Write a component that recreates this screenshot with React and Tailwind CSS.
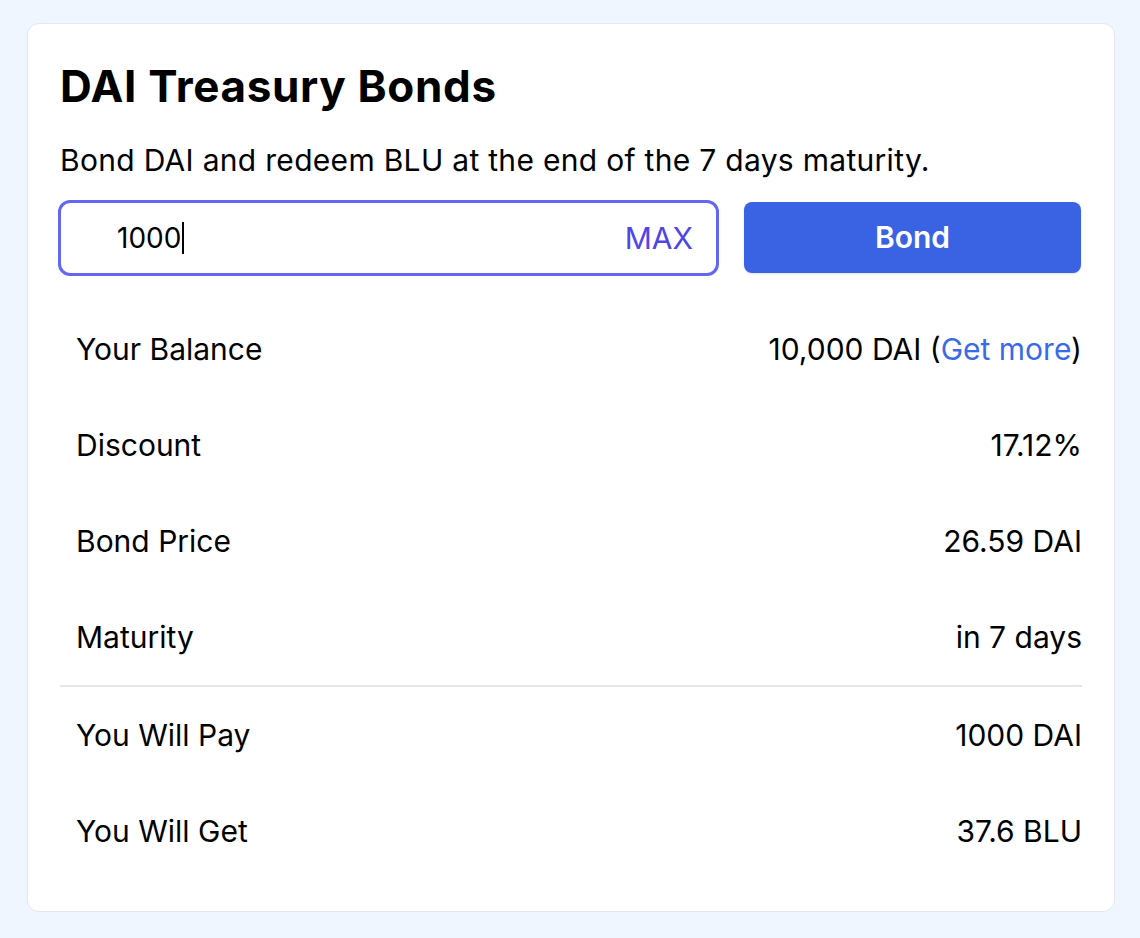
const rows = [
  { label: 'Your Balance', value: 'balance' },
  { label: 'Discount', value: '17.12%' },
  { label: 'Bond Price', value: '26.59 DAI' },
  { label: 'Maturity', value: 'in 7 days' },
];

const totals = [
  { label: 'You Will Pay', value: '1000 DAI' },
  { label: 'You Will Get', value: '37.6 BLU' },
];

const Row = ({ label, children }) => (
  <div className="flex justify-between items-center pl-4 py-8 text-[30px] leading-8 text-black">
    <span>{label}</span>
    <span>{children}</span>
  </div>
);

const App = () => {
  return (
    <div className="min-h-screen bg-[#eff6ff] pt-[23px] pl-[27px] font-['Inter',sans-serif]">
      <div className="w-[1088px] bg-white border border-[#e5e7eb] rounded-xl px-8 pt-[38px] pb-8">
        <h1 className="text-[44px] leading-[48px] font-bold text-black tracking-[0.015em]">DAI Treasury Bonds</h1>
        <p className="mt-8 text-[30px] leading-9 text-black tracking-[0.01em]">
          Bond DAI and redeem BLU at the end of the 7 days maturity.
        </p>

        <div className="mt-[22px] flex items-start gap-[25px] -ml-[2px] mr-[1px]">
          <div className="flex-1 h-[76px] border-[3px] border-[#6366f1] rounded-xl flex items-center justify-between pl-[56px] pr-[23px]">
            <span className="flex items-center text-[28px] text-black">
              1000<span className="inline-block w-[2px] h-[32px] bg-black ml-[1px]"></span>
            </span>
            <button className="text-[30px] text-[#4f46e5]">MAX</button>
          </div>
          <button className="w-[337px] h-[71px] mt-[2px] bg-[#3a63e3] rounded-lg text-white text-[30px] font-semibold shadow-sm">
            Bond
          </button>
        </div>

        <div className="mt-[25px]">
          {rows.map((row) => (
            <Row key={row.label} label={row.label}>
              {row.value === 'balance' ? (
                <>10,000 DAI (<a className="text-[#3a6ae6]">Get more</a>)</>
              ) : (
                row.value
              )}
            </Row>
          ))}
        </div>

        <div className="border-t-2 border-[#e5e7eb]">
          {totals.map((row) => (
            <Row key={row.label} label={row.label}>{row.value}</Row>
          ))}
        </div>
      </div>
    </div>
  );
};

export default App;
